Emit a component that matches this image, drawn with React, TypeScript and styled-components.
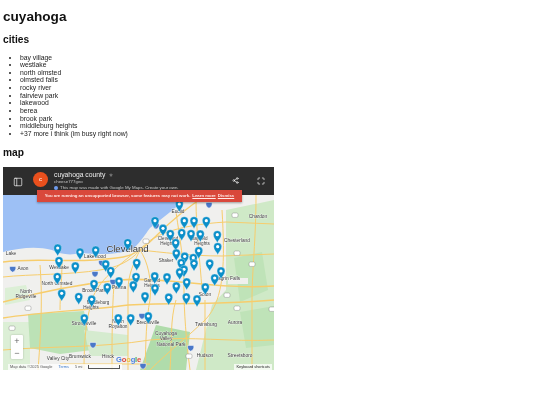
import React from "react";
import styled, { createGlobalStyle } from "styled-components";
import { Share2, Maximize, PanelLeft, Star } from "lucide-react";

const cities = [
  "bay village",
  "westlake",
  "north olmsted",
  "olmsted falls",
  "rocky river",
  "fairview park",
  "lakewood",
  "berea",
  "brook park",
  "middleburg heights",
  "+37 more i think (im busy right now)",
];

// head centres of the markers, in page pixels
const pins = [
  [57.7, 248], [80, 252], [95.7, 250], [127.7, 242.7], [59, 260.7], [75.3, 266],
  [105.7, 264], [110.7, 270.7], [136.7, 262.7], [57.3, 276.7], [94, 283.7], [119, 281],
  [107.3, 287], [136, 276.7], [133.3, 285], [61.7, 293.3], [78.7, 296.7], [91.7, 299.3],
  [84.3, 318], [118.3, 318], [130.7, 318], [179.3, 204], [155, 220.7], [184.3, 220.7],
  [194, 220.7], [206.3, 220.7], [163, 228.3], [170.3, 233.7], [181.7, 232.7], [191, 233.7],
  [200.3, 234], [217.3, 234.7], [175.7, 242.7], [217.7, 246.7], [198.7, 250.7], [176.3, 253],
  [184.7, 256.3], [193.3, 257.7], [194, 263.3], [181.3, 262.7], [209.7, 263.3], [184, 269.3],
  [179.7, 272], [221, 271], [214.7, 278], [154.7, 276], [167, 277], [186.7, 282],
  [176.3, 286], [155, 288], [205.3, 287], [145, 296], [168.7, 297.3], [186.3, 297],
  [197, 299], [148.3, 316],
];

const labels: [string, number, number, number, number?][] = [
  ["Cleveland", 127.5, 252, 9.5, 500],
  ["Euclid", 178, 213, 4.8],
  ["Cleveland", 168, 240, 4.6],
  ["Heights", 168, 245, 4.6],
  ["Mayfield", 199, 240, 4.6],
  ["Heights", 202, 245, 4.6],
  ["Chesterland", 237, 242, 4.8],
  ["Shaker", 166, 262, 4.6],
  ["Chagrin Falls", 226, 280, 4.8],
  ["Garfield", 152, 282, 4.6],
  ["Heights", 152, 287, 4.6],
  ["Solon", 205, 296, 4.8],
  ["Lakewood", 95, 258, 4.8],
  ["Westlake", 59, 269, 4.8],
  ["Avon", 23, 270, 4.8],
  ["Parma", 119, 289, 4.8],
  ["Brook Park", 94, 292, 4.8],
  ["North Olmsted", 57, 285, 4.8],
  ["North", 26, 293, 4.8],
  ["Ridgeville", 26, 298, 4.8],
  ["Middleburg", 98, 304, 4.6],
  ["Heights", 91, 309, 4.6],
  ["Strongsville", 84, 325, 4.8],
  ["North", 118, 323, 4.8],
  ["Royalton", 118, 328, 4.8],
  ["Brecksville", 148, 324, 4.8],
  ["Twinsburg", 206, 326, 4.8],
  ["Aurora", 235, 324, 4.8],
  ["Cuyahoga", 166, 335, 4.8],
  ["Valley", 166, 340, 4.8],
  ["National Park", 171, 346, 4.8],
  ["Hudson", 205, 357, 4.8],
  ["Streetsboro", 240, 357, 4.8],
  ["Valley City", 58, 360, 4.8],
  ["Brunswick", 80, 358, 4.8],
  ["Hinck", 108, 358, 4.8],
  ["Lake", 11, 255, 4.8],
  ["Chardon", 258, 218, 4.8],
];

const roads = [
  "M3 262 C30 258 60 262 95 260 C110 258 125 260 140 250 C155 240 165 222 205 196",
  "M3 302 C40 292 80 284 120 280 C160 276 220 290 274 286",
  "M3 318 C40 312 90 310 120 306 C150 302 200 306 274 300",
  "M84 370 C84 340 86 320 92 300 C98 280 120 265 135 252",
  "M128 370 L128 290 C128 275 134 262 140 250",
  "M145 370 C146 340 146 320 150 300 C152 280 148 262 140 250",
  "M190 370 C186 340 184 310 184 290 C184 260 180 240 176 212",
  "M150 370 C170 350 190 335 205 320 C225 300 225 260 222 210",
  "M3 350 C50 346 100 348 150 340 C190 336 230 342 274 340",
  "M40 265 C42 290 42 320 38 370",
  "M140 250 C160 252 190 256 222 256 L274 254",
  "M205 370 L205 300",
  "M170 370 C172 340 170 320 176 300",
  "M3 277 C30 274 70 275 100 270 C115 268 130 262 140 250",
  "M112 370 C112 340 112 310 114 285",
  "M60 310 C60 295 62 280 62 262",
  "M252 370 L252 300 C252 270 256 240 256 195",
  "M140 250 C150 236 176 225 226 222 L274 224",
  "M60 364 H150",
  "M196 200 C196 230 200 260 202 290",
];

const blueShields = [
  [12.7, 269], [101.7, 263], [95, 274], [113, 282], [93, 345],
  [143, 366], [209, 205], [142, 316], [190.7, 348], [156, 226],
];

const whiteShields = [
  [235, 215], [237, 253], [252, 264], [146, 241], [227, 295],
  [237, 308], [272, 309], [189, 356], [28, 308], [12, 328],
];

const Global = createGlobalStyle`
  body {
    margin: 0;
    background: #fff;
    color: #111;
    font-family: "Liberation Sans", Arial, sans-serif;
  }
`;

const Page = styled.div`
  padding: 3px;
  filter: blur(0.3px);
`;

const Title = styled.h1`
  margin: 6px 0 0;
  font-size: 13.6px;
  line-height: 16px;
  font-weight: 700;
`;

const Heading = styled.h2`
  margin: 9px 0 0;
  font-size: 10.2px;
  line-height: 12px;
  font-weight: 700;
`;

const CityList = styled.ul`
  margin: 7.5px 0 0;
  padding: 0 0 0 17px;
  font-size: 6.8px;
  line-height: 7.65px;
  color: #222;
`;

const MapFrame = styled.div`
  position: relative;
  width: 271px;
  height: 203px;
  margin-top: 8px;
  display: flex;
  flex-direction: column;
  overflow: hidden;
`;

const MapHeader = styled.header`
  flex: none;
  height: 28px;
  display: flex;
  align-items: flex-start;
  padding: 0 9px 0 10px;
  background: #2d2d2d;
  color: #fff;
`;

const PanelButton = styled.div`
  display: flex;
  margin-top: 10px;
`;

const Avatar = styled.div`
  width: 15px;
  height: 15px;
  margin: 5px 0 0 10px;
  border-radius: 50%;
  background: #e9501d;
  font-size: 6px;
  line-height: 15px;
  text-align: center;
`;

const MapInfo = styled.div`
  flex: 1;
  margin-left: 6px;
  padding-top: 4px;
  min-width: 0;
`;

const MapName = styled.div`
  display: flex;
  align-items: center;
  gap: 4px;
  font-size: 6.8px;
  line-height: 8px;
  color: #eee;
`;

const MapOwner = styled.div`
  display: flex;
  align-items: center;
  gap: 2px;
  font-size: 4.4px;
  line-height: 6px;
  color: #c4c4c4;
`;

const InfoDot = styled.span`
  width: 4px;
  height: 4px;
  border-radius: 50%;
  background: #6f9df0;
`;

const HeaderActions = styled.div`
  display: flex;
  align-items: center;
  gap: 18px;
  margin-top: 10px;
`;

const Banner = styled.div`
  position: absolute;
  top: 23px;
  left: 34px;
  width: 205px;
  height: 12px;
  background: #d9483b;
  color: #ffe9e6;
  font-size: 4.3px;
  font-weight: 700;
  line-height: 12px;
  text-align: center;
  white-space: nowrap;
  box-shadow: 0 1px 2px rgba(0, 0, 0, 0.35);

  span {
    margin-left: 2px;
    text-decoration: underline;
  }
`;

const MapCanvas = styled.svg`
  flex: 1;
  display: block;
  width: 100%;
  min-height: 0;
`;

const ZoomControl = styled.div`
  position: absolute;
  left: 8px;
  bottom: 11px;
  width: 12px;
  height: 24px;
  display: flex;
  flex-direction: column;
  background: #fff;
  border-radius: 1px;
  box-shadow: 0 0 2px rgba(0, 0, 0, 0.25);
`;

const ZoomButton = styled.div`
  flex: 1;
  color: #666;
  font-size: 9px;
  line-height: 12px;
  text-align: center;
`;

const Attribution = styled.div`
  position: absolute;
  left: 0;
  right: 0;
  bottom: 0;
  height: 6px;
  display: flex;
  align-items: center;
  gap: 6px;
  padding: 0 2px 0 5px;
  font-size: 3.9px;
  color: #555;
`;

const AttributionPart = styled.div`
  display: flex;
  align-items: center;
  gap: 6px;
  height: 100%;
  padding: 0 2px;
  background: rgba(255, 255, 255, 0.75);
`;

const TermsLink = styled.span`
  color: #3a78c9;
`;

const ScaleBar = styled.span`
  width: 30px;
  height: 3px;
  border: 0.5px solid #555;
  border-top: none;
`;

const Shortcuts = styled(AttributionPart)`
  margin-left: auto;
  color: #222;
`;

const GoogleMark = styled.div`
  position: absolute;
  left: 113px;
  bottom: 6px;
  font-size: 7.6px;
  font-weight: 700;
  text-shadow: 0 0 1px #fff;
  letter-spacing: -0.2px;

  b:nth-child(1) { color: #4a7fe0; }
  b:nth-child(2) { color: #d9483b; }
  b:nth-child(3) { color: #e8b93a; }
  b:nth-child(4) { color: #4a7fe0; }
  b:nth-child(5) { color: #3ea457; }
  b:nth-child(6) { color: #d9483b; }
`;

function Pin({ x, y }: { x: number; y: number }) {
  return (
    <g transform={`translate(${x} ${y})`}>
      <path
        d="M0 8C-1 5.5-4 3-4 0A4 4 0 0 1 4 0C4 3 1 5.5 0 8Z"
        fill="#0b8fc9"
        stroke="#fff"
        strokeWidth="0.3"
      />
      <circle r="1.6" fill="#fff" />
    </g>
  );
}

function MapDrawing() {
  return (
    <MapCanvas viewBox="3 195 271 175" preserveAspectRatio="none">
      <rect x="3" y="195" width="271" height="175" fill="#f0f0ee" />
      {/* parks and farmland */}
      <path d="M3 322 H30 V370 H3Z" fill="#dcefd6" />
      <path d="M28 314 L84 311 L92 350 L60 354 L30 348Z" fill="#bce2b6" />
      <path d="M84 330 L128 335 V356 H90Z" fill="#d5ebcf" />
      <path d="M226 210 L274 200 V370 H196 L212 305 L226 290Z" fill="#cfe9c7" />
      <path d="M234 258 L262 252 L268 290 L240 302Z" fill="#bfe3b8" />
      <path d="M240 312 L274 306 V345 L246 348Z" fill="#bfe3b8" />
      <path d="M156 325 L190 332 L186 370 H140Z" fill="#b0dcab" />
      <path d="M5 288 L26 285 L30 300 L5 305Z" fill="#dcefd6" />
      <path d="M228 278 H248 V284 H228Z" fill="#f0f0ee" />
      {/* lake */}
      <path
        d="M3 195 H190 C178 206 160 220 150 228 C144 236 142 240 134 248 C120 256 96 254 80 253 C70 256 60 254 52 250 C36 246 20 248 3 252Z"
        fill="#9dc0f5"
      />
      {roads.map((d, i) => (
        <path key={i} d={d} fill="none" stroke="#f7cd6c" strokeWidth={i < 3 ? 1.4 : 1} />
      ))}
      {blueShields.map(([x, y], i) => (
        <path
          key={i}
          transform={`translate(${x} ${y})`}
          d="M-3-2.6H3C3.6 0 2.6 2.2 0 3.2C-2.6 2.2-3.6 0-3-2.6Z"
          fill="#4a78c8"
          stroke="#fff"
          strokeWidth="0.5"
        />
      ))}
      {whiteShields.map(([x, y], i) => (
        <rect key={i} x={x - 3} y={y - 2} width="6" height="4.4" rx="1.4" fill="#fff" stroke="#777" strokeWidth="0.4" />
      ))}
      {labels.map(([text, x, y, size, weight], i) => (
        <text
          key={i}
          x={x}
          y={y}
          fontSize={size}
          fontWeight={weight ?? 400}
          fill="#333"
          stroke="#fff"
          strokeWidth="0.4"
          paintOrder="stroke"
          textAnchor="middle"
          fontFamily="'Liberation Sans', Arial, sans-serif"
        >
          {text}
        </text>
      ))}
      {pins.map(([x, y], i) => (
        <Pin key={i} x={x} y={y} />
      ))}
    </MapCanvas>
  );
}

export default function App() {
  return (
    <Page>
      <Global />
      <Title>cuyahoga</Title>
      <Heading>cities</Heading>
      <CityList>
        {cities.map((city) => (
          <li key={city}>{city}</li>
        ))}
      </CityList>
      <Heading>map</Heading>
      <MapFrame>
        <MapHeader>
          <PanelButton>
            <PanelLeft size={10} strokeWidth={1.6} />
          </PanelButton>
          <Avatar>c</Avatar>
          <MapInfo>
            <MapName>
              cuyahoga county
              <Star size={4} color="#777" fill="#777" />
            </MapName>
            <MapOwner>cheese777geo</MapOwner>
            <MapOwner>
              <InfoDot />
              This map was made with Google My Maps. Create your own.
            </MapOwner>
          </MapInfo>
          <HeaderActions>
            <Share2 size={7} />
            <Maximize size={8} />
          </HeaderActions>
        </MapHeader>
        <MapDrawing />
        <Banner>
          You are running an unsupported browser, some features may not work.
          <span>Learn more</span>
          <span>Dismiss</span>
        </Banner>
        <ZoomControl>
          <ZoomButton>+</ZoomButton>
          <ZoomButton>−</ZoomButton>
        </ZoomControl>
        <GoogleMark>
          <b>G</b>
          <b>o</b>
          <b>o</b>
          <b>g</b>
          <b>l</b>
          <b>e</b>
        </GoogleMark>
        <Attribution>
          <AttributionPart>
            <span>Map data ©2025 Google</span>
            <TermsLink>Terms</TermsLink>
            <span>5 mi</span>
            <ScaleBar />
          </AttributionPart>
          <Shortcuts>Keyboard shortcuts</Shortcuts>
        </Attribution>
      </MapFrame>
    </Page>
  );
}
